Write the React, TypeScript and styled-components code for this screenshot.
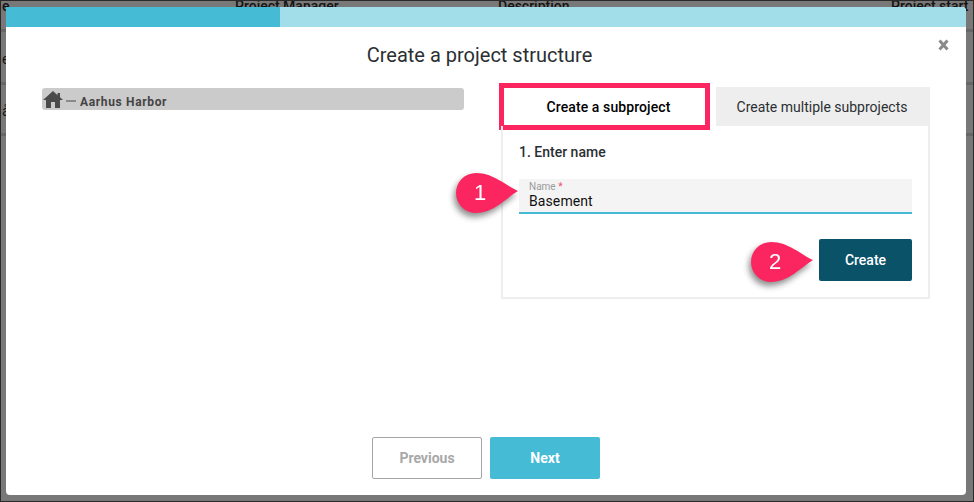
import React from "react";
import styled, { createGlobalStyle } from "styled-components";

const Global = createGlobalStyle`
  html, body { margin: 0; padding: 0; background: #777; }
  * { box-sizing: border-box; }
  body { font-family: Roboto, "Liberation Sans", sans-serif; }
`;

const Page = styled.div`
  position: relative;
  width: 974px;
  height: 502px;
  overflow: hidden;
  background: #787878;
  border: 1px solid #2a2a2a;
  padding: 6px 5px;
`;

const BackTable = styled.div`
  position: absolute;
  inset: 0;
  overflow: hidden;
  color: #141414;
  font-size: 14px;
`;

const BackRow = styled.div<{ $height: number }>`
  display: grid;
  grid-template-columns: 233px 263px 393px 1fr;
  height: ${(p) => p.$height}px;
  align-items: center;
  padding-top: 3px;
  border-bottom: 3px solid #676767;
`;

const HeaderRow = styled(BackRow)`
  font-weight: 500;
  align-items: start;
  line-height: 16px;
  padding-top: 0;
  margin-top: -3px;
`;

const BackCell = styled.div`
  white-space: nowrap;
  padding-left: 1px;
`;

const Modal = styled.div`
  position: relative;
  width: 960px;
  height: 488px;
  background: #fff;
  border-radius: 0 4px 4px 4px;
  display: flex;
  flex-direction: column;
  overflow: hidden;
`;

const Progress = styled.div`
  flex: none;
  height: 20px;
  background: #a1dee9;
`;

const ProgressFill = styled.div<{ $width: number }>`
  height: 100%;
  width: ${(p) => p.$width}px;
  background: #45bbd6;
`;

const Title = styled.h1`
  flex: none;
  margin: 0;
  height: 60px;
  padding: 14px 13px 0 0;
  text-align: center;
  font-size: 20px;
  line-height: 28px;
  font-weight: 400;
  color: #2b2f33;
`;

const Close = styled.button`
  position: absolute;
  top: 32px;
  right: 17px;
  width: 11px;
  height: 12px;
  padding: 0;
  border: 0;
  background: none;
  display: flex;
`;

const Content = styled.div`
  flex: 1;
  display: flex;
  gap: 37px;
  padding: 0 36px;
`;

const TreeColumn = styled.div`
  flex: none;
  width: 422px;
  padding-top: 1px;
`;

const TreeRow = styled.div`
  height: 22px;
  background: #cbcbcb;
  border-radius: 3px;
  display: flex;
  align-items: center;
  padding-left: 1px;
  color: #444;
  font-size: 12px;
  font-weight: 700;
  letter-spacing: 0.65px;
`;

const Dash = styled.span`
  width: 10px;
  height: 1.5px;
  background: #8a8a8a;
  margin: 4px 4px 0 3px;
`;

const TreeLabel = styled.span`
  margin-top: 5px;
`;

const FormColumn = styled.div`
  flex: none;
  width: 429px;
`;

const Tabs = styled.div`
  position: relative;
  display: flex;
  height: 39px;
`;

const Tab = styled.div<{ $active?: boolean; $width: number }>`
  width: ${(p) => p.$width}px;
  display: flex;
  align-items: center;
  justify-content: center;
  font-size: 14px;
  font-weight: ${(p) => (p.$active ? 500 : 400)};
  letter-spacing: ${(p) => (p.$active ? "0.1px" : "0")};
  color: ${(p) => (p.$active ? "#000" : "#2b2f33")};
  background: ${(p) => (p.$active ? "#fff" : "#eeeeee")};
  padding: ${(p) => (p.$active ? "1px 0 0" : "1px 2px 0 0")};
`;

const Highlight = styled.div`
  position: absolute;
  left: -2px;
  top: -4px;
  width: 211px;
  height: 47px;
  border: 5px solid #fb2560;
  pointer-events: none;
`;

const Panel = styled.div`
  position: relative;
  height: 173px;
  border: 2px solid #eeeeee;
  border-top: 0;
  padding: 16px 16px 0;
  display: flex;
  flex-direction: column;
`;

const StepTitle = styled.div`
  font-size: 14px;
  font-weight: 500;
  line-height: 20px;
  color: #2b2f33;
  margin-bottom: 17px;
`;

const Field = styled.div`
  height: 35px;
  background: #f4f4f4;
  border-bottom: 2px solid #45bbd6;
  padding: 3px 10px 0;
  display: flex;
  flex-direction: column;
`;

const FieldLabel = styled.span`
  font-size: 10px;
  line-height: 10px;
  color: #9a9a9a;
`;

const Required = styled.span`
  color: #f0506e;
`;

const FieldValue = styled.span`
  font-size: 14px;
  line-height: 17px;
  margin-top: 1px;
  color: #111;
  letter-spacing: 0.1px;
`;

const ActionRow = styled.div`
  display: flex;
  justify-content: flex-end;
  margin-top: 25px;
`;

const CreateButton = styled.button`
  width: 93px;
  height: 42px;
  border: 0;
  border-radius: 2px;
  background: #0a5268;
  color: #fff;
  font: 500 14px Roboto, sans-serif;
`;

const Callout = styled.div<{ $left: number; $top: number }>`
  position: absolute;
  left: ${(p) => p.$left}px;
  top: ${(p) => p.$top}px;
  width: 63px;
  height: 41px;
  filter: drop-shadow(-2px 4px 3px rgba(0, 0, 0, 0.45));
`;

const CalloutNumber = styled.span`
  position: absolute;
  left: 0;
  top: 0;
  width: 48px;
  height: 40px;
  display: flex;
  align-items: center;
  justify-content: center;
  color: #fff;
  font: 400 22px "Liberation Sans", sans-serif;
`;

const Footer = styled.div`
  flex: none;
  display: flex;
  justify-content: center;
  gap: 8px;
  padding-bottom: 16px;
`;

const FooterButton = styled.button<{ $primary?: boolean }>`
  width: 110px;
  height: 42px;
  border-radius: 2px;
  border: ${(p) => (p.$primary ? "0" : "1px solid #a5a5a5")};
  background: ${(p) => (p.$primary ? "#45bbd6" : "#fff")};
  color: ${(p) => (p.$primary ? "#fff" : "#a8a8a8")};
  font: 700 14px Roboto, sans-serif;
`;

const Teardrop = () => (
  <svg width="63" height="41" viewBox="0 0 63 41">
    <path
      d="M62 18 C50 13 38 0 20 0 A20 20 0 0 0 20 40 C38 40 50 25 62 18 Z"
      fill="#fb2560"
    />
  </svg>
);

export default function App() {
  return (
    <Page>
      <Global />
      <BackTable>
        <HeaderRow $height={34}>
          <BackCell>e</BackCell>
          <BackCell>Project Manager</BackCell>
          <BackCell>Description</BackCell>
          <BackCell>Project start</BackCell>
        </HeaderRow>
        <BackRow $height={53}>
          <BackCell>e</BackCell>
        </BackRow>
        <BackRow $height={51}>
          <BackCell>å</BackCell>
        </BackRow>
      </BackTable>
      <Modal>
        <Progress>
          <ProgressFill $width={274} />
        </Progress>
        <Title>Create a project structure</Title>
        <Close aria-label="Close">
          <svg width="11" height="12" viewBox="0 0 11 12">
            <path d="M1.5 1.5 9.5 10.5M9.5 1.5 1.5 10.5" stroke="#8a8a8a" strokeWidth="3" fill="none" />
          </svg>
        </Close>
        <Content>
          <TreeColumn>
            <TreeRow>
              <svg width="20" height="17" viewBox="2 3 20 17">
                <path d="M10 20v-6h4v6h5v-8h3l-3-2.7V5h-2.5v2.2L12 3 2 12h3v8z" fill="#4a4a4a" />
              </svg>
              <Dash />
              <TreeLabel>Aarhus Harbor</TreeLabel>
            </TreeRow>
          </TreeColumn>
          <FormColumn>
            <Tabs>
              <Tab $active $width={215}>Create a subproject</Tab>
              <Tab $width={214}>Create multiple subprojects</Tab>
              <Highlight />
            </Tabs>
            <Panel>
              <StepTitle>1. Enter name</StepTitle>
              <Field>
                <FieldLabel>
                  Name <Required>*</Required>
                </FieldLabel>
                <FieldValue>Basement</FieldValue>
              </Field>
              <ActionRow>
                <CreateButton>Create</CreateButton>
              </ActionRow>
              <Callout $left={-47} $top={47}>
                <Teardrop />
                <CalloutNumber>1</CalloutNumber>
              </Callout>
              <Callout $left={248} $top={116}>
                <Teardrop />
                <CalloutNumber>2</CalloutNumber>
              </Callout>
            </Panel>
          </FormColumn>
        </Content>
        <Footer>
          <FooterButton>Previous</FooterButton>
          <FooterButton $primary>Next</FooterButton>
        </Footer>
      </Modal>
    </Page>
  );
}
